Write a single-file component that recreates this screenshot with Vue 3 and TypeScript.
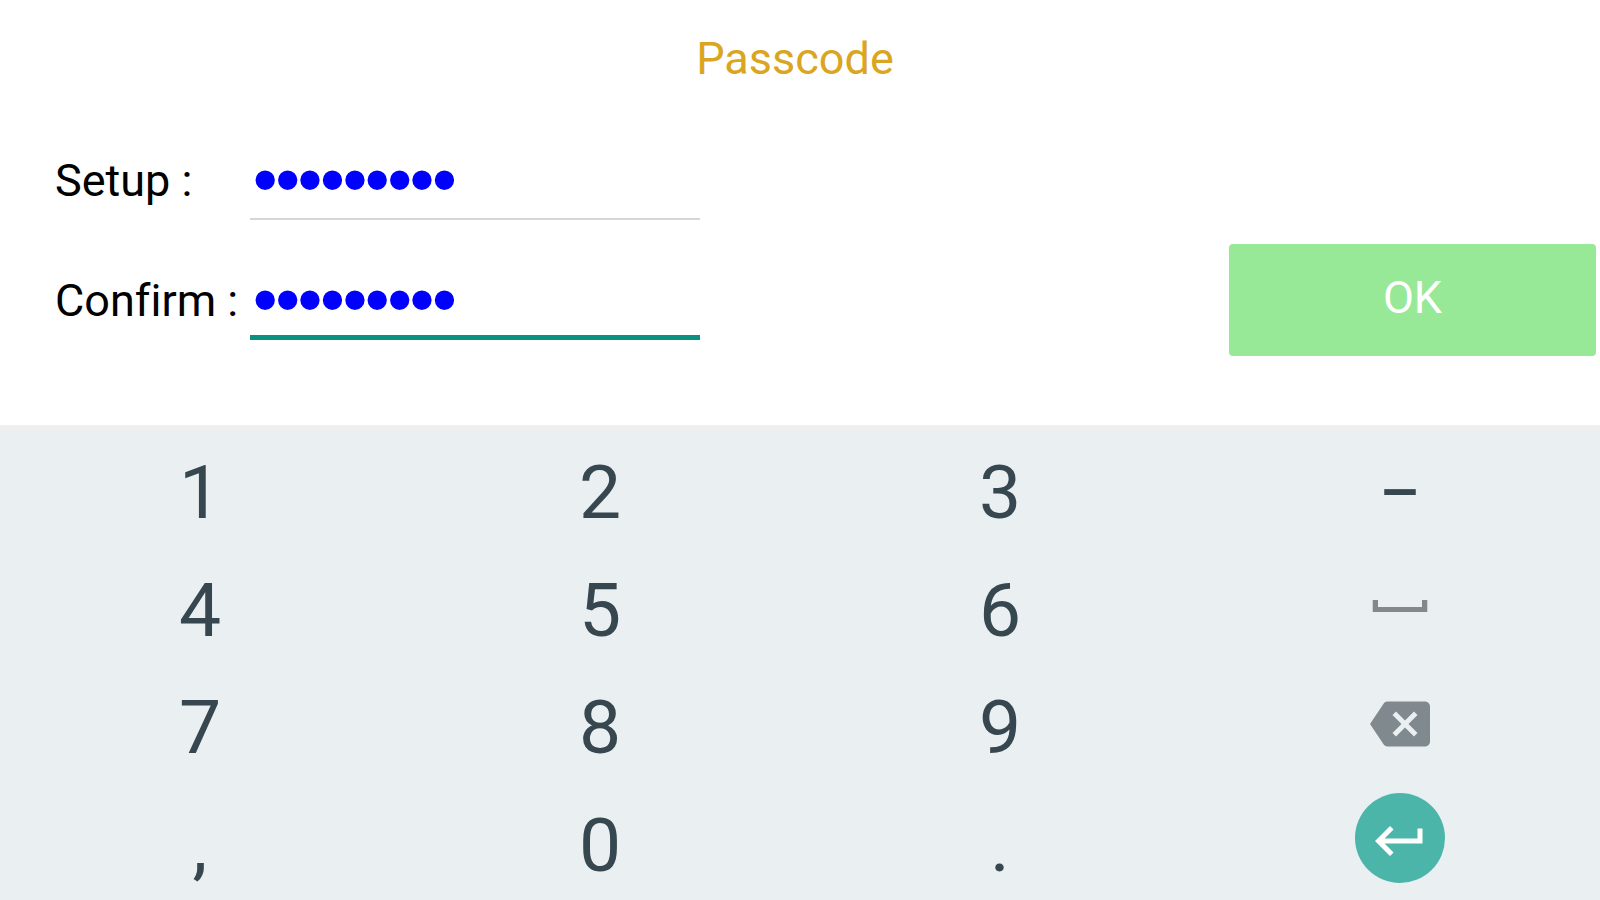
<script setup lang="ts">
import { ref } from 'vue'

interface Key {
  id: string
  label: string
  text?: string
}

const setup = ref('123456789')
const confirm = ref('123456789')

const digit = (text: string): Key => ({ id: text, label: text, text })

const keys: Key[] = [
  digit('1'), digit('2'), digit('3'), { id: 'dash', label: 'Dash', text: '–' },
  digit('4'), digit('5'), digit('6'), { id: 'space', label: 'Space' },
  digit('7'), digit('8'), digit('9'), { id: 'backspace', label: 'Backspace' },
  digit(','), digit('0'), digit('.'), { id: 'enter', label: 'Enter' },
]

function press(key: Key) {
  if (key.text) confirm.value += key.text
  else if (key.id === 'space') confirm.value += ' '
  else if (key.id === 'backspace') confirm.value = confirm.value.slice(0, -1)
}
</script>

<template>
  <main class="page">
    <form class="form" @submit.prevent>
      <h1 class="title">Passcode</h1>
      <div class="body">
        <div class="fields">
          <label for="setup">Setup :</label>
          <input id="setup" v-model="setup" type="password" autocomplete="off">
          <label for="confirm">Confirm :</label>
          <input id="confirm" v-model="confirm" class="active" type="password" autocomplete="off">
        </div>
        <button class="ok" type="submit">OK</button>
      </div>
    </form>

    <section class="keypad" aria-label="Keypad">
      <button
        v-for="key in keys"
        :key="key.id"
        class="key"
        :class="{ character: key.text, dash: key.id === 'dash' }"
        type="button"
        :aria-label="key.label"
        @click="press(key)"
      >
        <template v-if="key.text">{{ key.text }}</template>
        <svg v-else-if="key.id === 'space'" width="60" height="60" viewBox="0 0 60 60">
          <path d="M2.700 24h5.300v7h44v-7h5.300v12H2.700z" fill="#82898c" />
        </svg>
        <svg v-else-if="key.id === 'backspace'" width="60" height="60" viewBox="0 0 24 24">
          <path
            fill="#808a8e"
            d="M22 3H7c-.69 0-1.23.35-1.59.88L0 12l5.41 8.11c.36.53.9.89 1.59.89h15c1.1 0 2-.9 2-2V5c0-1.1-.9-2-2-2zm-3 12.59L17.59 17 14 13.41 10.41 17 9 15.59 12.59 12 9 8.41 10.41 7 14 10.59 17.59 7 19 8.41 15.41 12 19 15.59z"
          />
        </svg>
        <svg v-else width="90" height="96" viewBox="0 0 90 96">
          <circle cx="45" cy="45" r="45" fill="#4bb5aa" />
          <path
            transform="translate(15 18) scale(2.5)"
            fill="#fff"
            d="M19 7v4H5.83l3.58-3.59L8 6l-6 6 6 6 1.41-1.41L5.83 13H21V7z"
          />
        </svg>
      </button>
    </section>
  </main>
</template>

<style>
body {
  margin: 0;
  background: #fff;
}
</style>

<style scoped>
.page {
  display: flex;
  flex-direction: column;
  min-height: 100vh;
  font-family: Roboto, sans-serif;
  font-size: 45px;
  font-variant-ligatures: none;
  line-height: 60px;
  color: #000;
}

.form {
  padding: 29px 4px 65px 54px;
}

.title {
  margin: 0 60px 51px 0;
  font-size: 45px;
  font-weight: 400;
  text-align: center;
  color: #daa520;
}

.body {
  display: flex;
  justify-content: space-between;
  align-items: flex-end;
}

.fields {
  display: grid;
  grid-template-columns: 196px minmax(0, 450px);
  row-gap: 40px;
  align-items: center;
  margin-bottom: 20px;
}

.fields label {
  padding: 2px 0 0 1px;
  white-space: nowrap;
}

.fields input {
  box-sizing: border-box;
  width: 100%;
  height: 80px;
  margin: 0;
  padding: 0 4px;
  border: 0;
  border-radius: 0;
  outline: 0;
  background: transparent;
  box-shadow: inset 0 -2px #d6d6d6;
  font-family: "Liberation Sans", sans-serif;
  font-size: 64px;
  color: #00f;
  -webkit-text-stroke: 2px #00f;
}

.fields input.active {
  box-shadow: inset 0 -5px #0b917f;
}

.ok {
  width: 367px;
  height: 112px;
  margin-bottom: 4px;
  padding: 0 0 4px;
  border: 0;
  border-radius: 4px;
  background: #97e897;
  font: inherit;
  color: #fff;
}

.keypad {
  flex: 1;
  display: grid;
  grid-template-columns: repeat(4, 1fr);
  grid-auto-rows: 1fr;
  padding-top: 5px;
  background: #eaeff2;
  box-shadow: inset 0 7px #eee;
}

.key {
  display: flex;
  align-items: center;
  justify-content: center;
  min-height: 96px;
  margin: 0;
  padding: 0;
  border: 0;
  background: transparent;
  font-family: inherit;
  font-size: 75px;
  line-height: 88px;
  color: #37474f;
}

.key.character {
  padding-top: 7px;
}

.key.dash {
  padding: 0 0 12px;
  font-family: "Noto Sans", sans-serif;
}
</style>
